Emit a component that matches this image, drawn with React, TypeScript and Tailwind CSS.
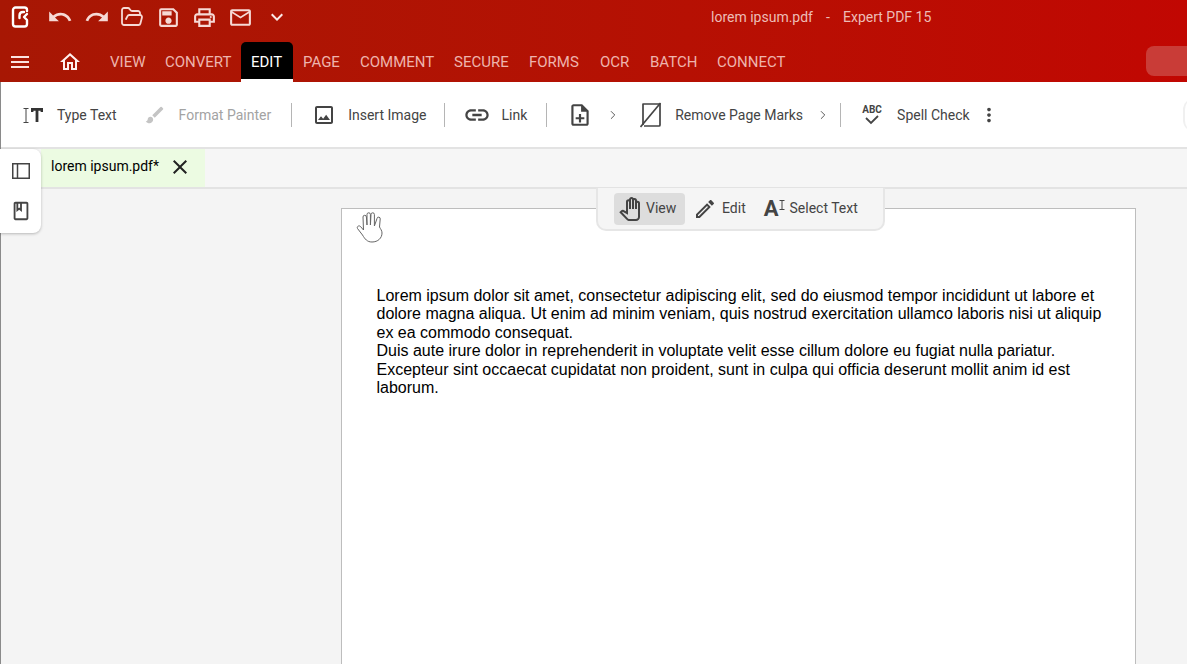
import React from 'react'
import {
  MdUndo, MdRedo, MdOutlineSave, MdOutlinePrint, MdOutlineMail, MdExpandMore, MdMenu,
  MdOutlineHome, MdClose, MdLink, MdOutlineNoteAdd, MdMoreVert, MdOutlineEdit, MdOutlineImage,
  MdBrush, MdOutlineBook, MdOutlinePanTool,
} from 'react-icons/md'
import { FolderOpen, ChevronRight } from 'lucide-react'

const tabs = [
  { label: 'VIEW', left: 110 },
  { label: 'CONVERT', left: 165 },
  { label: 'EDIT', left: 251, active: true },
  { label: 'PAGE', left: 303 },
  { label: 'COMMENT', left: 360 },
  { label: 'SECURE', left: 454 },
  { label: 'FORMS', left: 529 },
  { label: 'OCR', left: 600 },
  { label: 'BATCH', left: 650 },
  { label: 'CONNECT', left: 717 },
]

const Divider = ({ className }: { className: string }) => <div className={`w-px h-6 bg-[#b5b5b5] ${className}`} />

const Logo = () => (
  <svg width="18" height="22" viewBox="0 0 18 22" fill="none" stroke="#fff" strokeWidth="2.4" strokeLinecap="round" strokeLinejoin="round">
    <path d="M16 5V4a2.500 2.500 0 0 0-2.500-2.500h-9A2.500 2.500 0 0 0 2 4v14a2.500 2.500 0 0 0 2.500 2.500h9A2.500 2.500 0 0 0 16 18v-4l-3-3 3-3" />
    <path d="M8.500 12V9.500C8.500 7.500 10 6 12 6h1" />
  </svg>
)

const IBeam = ({ h, color }: { h: number; color: string }) => (
  <svg width="6" height={h} viewBox={`0 0 6 ${h}`} fill="none" stroke={color} strokeWidth="1">
    <path d={`M0.500 0.500h5M0.500 ${h - 0.5}h5M3 0.500v${h - 1}`} />
  </svg>
)

const TypeTextIcon = () => (
  <div className="flex items-center gap-[2px]">
    <IBeam h={15} color="#444" />
    <svg width="12" height="14" viewBox="0 0 12 14" fill="none" stroke="#333" strokeWidth="2.800">
      <path d="M1 4V1.400h10V4M6 1.400V14" />
    </svg>
  </div>
)

const RemoveMarksIcon = () => (
  <svg width="22" height="26" viewBox="0 0 22 26" fill="none" stroke="#444" strokeWidth="1.700" strokeLinejoin="round">
    <path d="M3 23V2h14l3 0v21a1 1 0 0 1-1 1H4" />
    <path d="M0.500 25 20.500 1" />
  </svg>
)

const SpellIcon = () => (
  <div className="flex flex-col items-center w-[22px]">
    <span className="text-[10px] leading-[10px] font-bold text-[#444]">ABC</span>
    <svg width="16" height="10" viewBox="0 0 16 10" fill="none" stroke="#444" strokeWidth="1.800">
      <path d="M2 3l5 5 7-7" />
    </svg>
  </div>
)

const PanelIcon = () => (
  <svg width="18" height="16" viewBox="0 0 18 16" fill="none" stroke="#444" strokeWidth="1.500">
    <rect x="0.750" y="0.750" width="16.500" height="14.500" />
    <path d="M5.500 1v14" />
  </svg>
)

const ThinHand = () => (
  <svg width="28" height="32" viewBox="0 0 28 32" fill="#fff" stroke="#666" strokeWidth="1" strokeLinejoin="round">
    <path d="M7.500 18 7 5a1.700 1.700 0 0 1 3.400 0L11 13V2.500a1.700 1.700 0 0 1 3.400 0V13l.6-10.500a1.700 1.700 0 0 1 3.400 0V14L21 6.500a1.600 1.600 0 0 1 3.200.5L23.500 15c1 2 2.500 3.500 2.500 6 0 5-4 9-10 9-5 0-7-3-9.500-7L1.500 16.500c-1-2 1.500-3.500 3-2z" />
  </svg>
)

export default function App() {
  return (
    <div className="relative w-[1187px] h-[664px] overflow-hidden bg-[#f4f4f4] font-['Roboto',sans-serif] text-[14px] text-[#333]">
      <header className="h-[82px] bg-gradient-to-r from-[#a71704] to-[#c10702] flex flex-col">
        <div className="relative h-[42px] flex items-center pl-[11px] pb-[8px] text-[#f6d9d5]">
          <Logo />
          <MdUndo size={26} className="ml-[18px]" />
          <MdRedo size={26} className="ml-[11px]" />
          <FolderOpen size={24} strokeWidth={1.800} className="ml-[10px]" />
          <MdOutlineSave size={25} className="ml-[12px]" />
          <MdOutlinePrint size={25} className="ml-[11px]" />
          <MdOutlineMail size={25} className="ml-[11px]" />
          <MdExpandMore size={24} className="ml-[12px] text-[#fbe9e7]" />
          <span className="absolute left-[711px] top-[8px] leading-[18px] text-[#edbcb6]">lorem ipsum.pdf</span>
          <span className="absolute left-[826px] top-[8px] leading-[18px] text-[#edbcb6]">-</span>
          <span className="absolute left-[843px] top-[8px] leading-[18px] text-[#edbcb6]">Expert PDF 15</span>
        </div>
        <div className="relative h-[40px] text-[#eeb4ad]">
          <MdMenu size={24} className="absolute left-[8px] top-[8px] text-[#fbe3e0]" />
          <MdOutlineHome size={24} className="absolute left-[58px] top-[8px] text-[#fff0ee]" />
          <div className="absolute left-[241px] top-0 w-[52px] h-[40px] bg-black rounded-t-[5px] border-b-[3px] border-white" />
          {tabs.map((t) => (
            <span
              key={t.label}
              className={`absolute top-[11px] leading-[18px] text-[15px] ${t.active ? 'text-white' : ''}`}
              style={{ left: t.left }}
            >
              {t.label}
            </span>
          ))}
          <div className="absolute left-[1146px] top-[4px] w-[60px] h-[30px] rounded-[8px] bg-[#c93c37]" />
        </div>
      </header>

      <div className="border-l border-l-[#8a8a8a] h-[582px] flex flex-col">
        <div className="relative h-[67px] shrink-0 pt-[1px] bg-white border-b-2 border-b-[#e3e3e3] flex items-center text-[#444]">
          <div className="ml-[22px] w-[20px] flex"><TypeTextIcon /></div>
          <span className="ml-[14px]">Type Text</span>
          <MdBrush size={22} className="ml-[27px] text-[#c4c4c4]" />
          <span className="ml-[13px] text-[#a3a3a3]">Format Painter</span>
          <Divider className="ml-[20px]" />
          <MdOutlineImage size={24} className="ml-[20px]" />
          <span className="ml-[12px]">Insert Image</span>
          <Divider className="ml-[18px]" />
          <MdLink size={28} className="ml-[18px]" />
          <span className="ml-[10px]">Link</span>
          <Divider className="ml-[19px]" />
          <MdOutlineNoteAdd size={26} className="ml-[20px]" />
          <ChevronRight size={14} strokeWidth={1.500} className="ml-[13px]" />
          <div className="ml-[20px] flex"><RemoveMarksIcon /></div>
          <span className="ml-[13px]">Remove Page Marks</span>
          <ChevronRight size={14} strokeWidth={1.500} className="ml-[13px]" />
          <Divider className="ml-[10px]" />
          <div className="ml-[20px] flex"><SpellIcon /></div>
          <span className="ml-[14px]">Spell Check</span>
          <MdMoreVert size={22} className="ml-[8px]" />
          <div className="absolute left-[1182px] top-[16px] w-[30px] h-[34px] rounded-l-[12px] border-l-2 border-l-[#f0f0f0]" />
        </div>

        <div className="h-[40px] shrink-0 bg-[#f6f6f6] border-b-2 border-b-[#e3e3e3] flex pl-[40px]">
          <div className="w-[164px] h-[38px] bg-[#ecfbe2] flex items-center pl-[10px] text-black">
            <span className="-mt-[3px]">lorem ipsum.pdf*</span>
            <MdClose size={24} className="ml-[9px] -mt-[2px] text-[#222]" />
          </div>
        </div>

        <main className="pl-[340px] pt-[19px]">
          <div className="relative w-[795px] h-[470px] bg-white border border-[#bdbdbd] pt-[78px] px-[34.5px] font-['Liberation_Sans',sans-serif] text-[16px] leading-[18.4px] text-black">
            <div className="absolute left-[14px] top-[3px] flex"><ThinHand /></div>
            <p className="w-[730px]">
              Lorem ipsum dolor sit amet, consectetur adipiscing elit, sed do eiusmod tempor incididunt ut labore et dolore magna aliqua. Ut enim ad minim veniam, quis nostrud exercitation ullamco laboris nisi ut aliquip ex ea commodo consequat.
            </p>
            <p className="w-[730px]">
              Duis aute irure dolor in reprehenderit in voluptate velit esse cillum dolore eu fugiat nulla pariatur. Excepteur sint occaecat cupidatat non proident, sunt in culpa qui officia deserunt mollit anim id est laborum.
            </p>
          </div>
        </main>
      </div>

      <div className="absolute left-0 top-[149px] w-[41px] h-[84px] bg-white rounded-r-[8px] shadow-[0_1px_3px_rgba(0,0,0,0.25)] flex flex-col items-center pt-[14px] gap-[22px] text-[#444]">
        <PanelIcon />
        <MdOutlineBook size={22} className="-mt-[1px]" />
      </div>

      <div className="absolute left-[596px] top-[188px] w-[289px] h-[43px] bg-[#f5f5f5] border-2 border-t-0 border-[#e6e6e6] rounded-b-[10px] flex items-center pl-[16px] text-[#444]">
        <div className="w-[71px] h-[32px] mt-[1px] bg-[#dddddd] rounded-[4px] flex items-center pl-[4px]">
          <MdOutlinePanTool size={24} />
          <span className="ml-[4px] -mt-[1px]">View</span>
        </div>
        <MdOutlineEdit size={24} className="ml-[8px]" />
        <span className="ml-[5px]">Edit</span>
        <span className="ml-[18px] text-[22px] font-bold leading-none">A</span>
        <div className="-mt-[7px] flex"><IBeam h={10} color="#444" /></div>
        <span className="ml-[5px]">Select Text</span>
      </div>
    </div>
  )
}
